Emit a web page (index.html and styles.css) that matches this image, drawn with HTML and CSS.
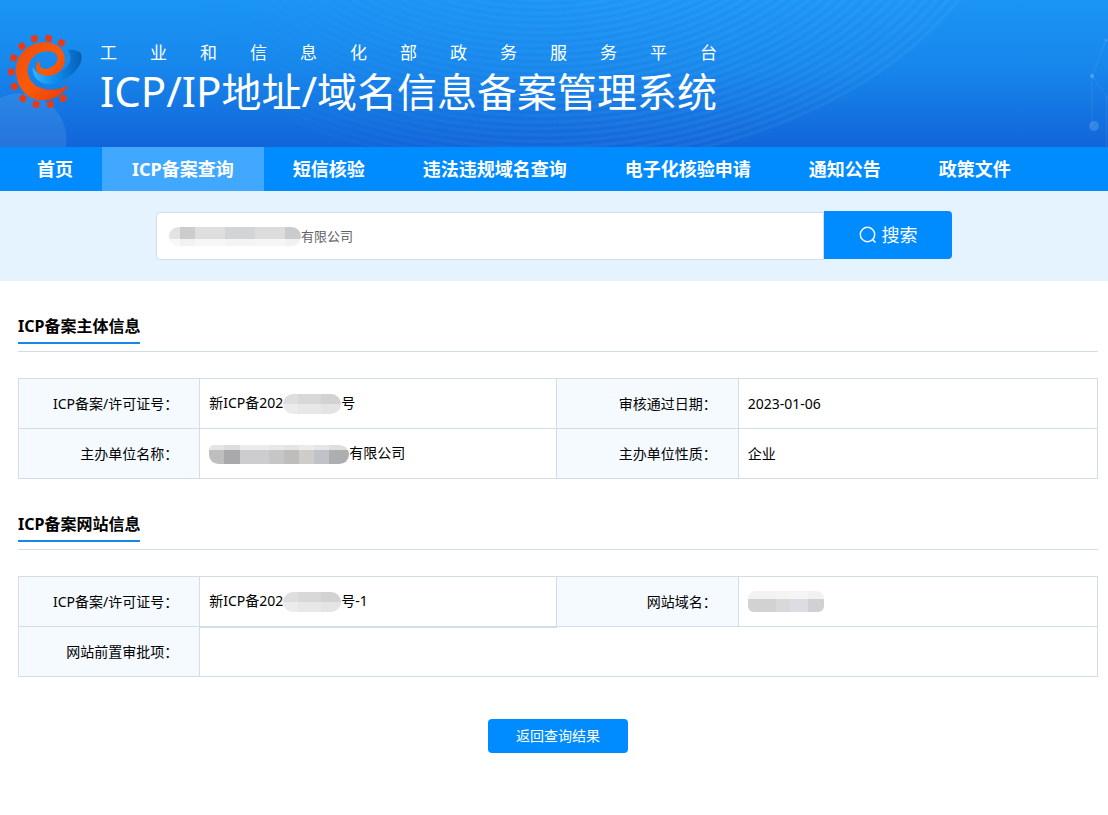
FILE: index.html
```html
<!DOCTYPE html>
<html lang="zh-CN">
<head>
<meta charset="utf-8">
<meta name="viewport" content="width=device-width, initial-scale=1">
<title>ICP/IP地址/域名信息备案管理系统</title>
<link rel="stylesheet" href="styles.css">
</head>
<body>
<header class="banner">
  <svg class="constellation" viewBox="0 0 40 147" aria-hidden="true">
    <g stroke="#fff" stroke-opacity=".08" fill="none">
      <path d="M24 76V126M24 76L38 40M24 76L40 98M38.500 96V147"/>
    </g>
    <g fill="#7fbcff">
      <circle cx="24" cy="76" r="2" opacity=".5"/>
      <circle cx="26" cy="126" r="5" opacity=".3"/>
      <circle cx="38" cy="40" r="1.500" opacity=".3"/>
    </g>
  </svg>
  <svg class="logo" viewBox="20 40 230 230" aria-hidden="true">
    <defs>
      <linearGradient id="flame" x1="0" y1="0" x2="1" y2="1">
        <stop offset="0" stop-color="#f04a10"/>
        <stop offset=".5" stop-color="#fb5c06"/>
        <stop offset="1" stop-color="#e8380f"/>
      </linearGradient>
      <linearGradient id="wave" x1="0" y1="0" x2="1" y2="0">
        <stop offset="0" stop-color="#35b4ff"/>
        <stop offset=".45" stop-color="#0c8df0"/>
        <stop offset="1" stop-color="#0660b4"/>
      </linearGradient>
    </defs>
    <g fill="#e93a18">
      <rect x="-10" y="-10" width="20" height="20" rx="4" transform="translate(185 70) rotate(32)"/>
      <rect x="-10" y="-10" width="20" height="20" rx="4" transform="translate(146 56) rotate(10)"/>
      <rect x="-10" y="-10" width="20" height="20" rx="4" transform="translate(103 57) rotate(-14)"/>
      <rect x="-10" y="-10" width="20" height="20" rx="4" transform="translate(65 80) rotate(-40)"/>
      <rect x="-10" y="-10" width="20" height="20" rx="4" transform="translate(40 115) rotate(-66)"/>
      <rect x="-10" y="-10" width="20" height="20" rx="4" transform="translate(33 158)"/>
      <rect x="-10" y="-10" width="20" height="20" rx="4" transform="translate(42 202) rotate(-28)"/>
      <rect x="-10" y="-10" width="20" height="20" rx="4" transform="translate(68 238) rotate(34)"/>
      <rect x="-10" y="-10" width="20" height="20" rx="4" transform="translate(108 256) rotate(10)"/>
      <rect x="-10" y="-10" width="20" height="20" rx="4" transform="translate(151 256) rotate(-12)"/>
      <rect x="-10" y="-10" width="20" height="20" rx="4" transform="translate(190 238) rotate(-34)"/>
    </g>
    <path fill="url(#wave)" d="M98 142C92 190 150 210 192 182C232 160 252 128 244 102C236 92 215 89 203 92C222 112 212 142 180 160C150 174 112 172 98 142Z"/>
    <path fill="url(#flame)" d="M206 197C188 232 152 246 118 243C74 236 47 198 47 152C48 104 86 68 136 68C172 69 196 92 195 122C192 158 164 172 136 169C108 166 98 144 118 122C116 142 126 151 140 149C164 142 178 124 171 108C160 90 124 92 104 108C80 128 76 160 92 184C110 214 164 222 206 197Z"/>
  </svg>
  <div class="titles">
    <p class="subtitle">工业和信息化部政务服务平台</p>
    <h1 class="title"><span class="latin">ICP/IP</span>地址<span class="latin">/</span>域名信息备案管理系统</h1>
  </div>
</header>

<nav class="nav">
  <a class="nav-item" href="#">首页</a>
  <a class="nav-item active" href="#" aria-current="page">ICP备案查询</a>
  <a class="nav-item" href="#">短信核验</a>
  <a class="nav-item" href="#">违法违规域名查询</a>
  <a class="nav-item" href="#">电子化核验申请</a>
  <a class="nav-item" href="#">通知公告</a>
  <a class="nav-item" href="#">政策文件</a>
</nav>

<form class="search">
  <div class="search-field">
    <input class="search-input" type="text" aria-label="查询内容" value="有限公司">
    <span class="mask mask-search"></span>
  </div>
  <button class="search-button" type="button">
    <svg class="search-icon" viewBox="0 0 18 18" aria-hidden="true"><circle cx="8.500" cy="8.500" r="7.200"/><path d="M13.500 13.500L16.500 16.500"/></svg>
    <span>搜索</span>
  </button>
</form>

<main class="content">
  <section class="section">
    <div class="section-head"><h2 class="section-title">ICP备案主体信息</h2></div>
    <table class="info">
      <colgroup><col class="col-label"><col class="col-value"><col class="col-label"><col></colgroup>
      <tr>
        <th scope="row">ICP备案/许可证号：</th>
        <td>新ICP备202<span class="mask mask-number"></span>号</td>
        <th scope="row">审核通过日期：</th>
        <td>2023-01-06</td>
      </tr>
      <tr>
        <th scope="row">主办单位名称：</th>
        <td><span class="mask mask-company"></span>有限公司</td>
        <th scope="row">主办单位性质：</th>
        <td>企业</td>
      </tr>
    </table>
  </section>

  <section class="section">
    <div class="section-head"><h2 class="section-title">ICP备案网站信息</h2></div>
    <table class="info">
      <colgroup><col class="col-label"><col class="col-value"><col class="col-label"><col></colgroup>
      <tr>
        <th scope="row">ICP备案/许可证号：</th>
        <td class="thick">新ICP备202<span class="mask mask-number"></span>号-1</td>
        <th scope="row">网站域名：</th>
        <td><span class="mask mask-domain"></span></td>
      </tr>
      <tr>
        <th scope="row">网站前置审批项：</th>
        <td colspan="3"></td>
      </tr>
    </table>
  </section>

  <button class="back" type="button">返回查询结果</button>
</main>
</body>
</html>
```

FILE: styles.css
```css
* {
  box-sizing: border-box;
}

body {
  margin: 0;
  background: #fff;
  color: #000;
  font: 14px/20px "Noto Sans", "Noto Sans CJK SC", sans-serif;
}

button,
input {
  font: inherit;
}

/* Banner */
.banner {
  position: relative;
  display: flex;
  align-items: flex-start;
  gap: 17px;
  min-height: 147px;
  padding: 33px 7px 0;
  overflow: hidden;
  color: #fff;
  background:
    radial-gradient(circle at 20px 140px, rgba(255, 255, 255, 0.09) 46px, transparent 47px),
    linear-gradient(#1b95f5, #1787ec 45%, #1265d8);
}

.banner::before {
  content: "";
  position: absolute;
  inset: 0;
  background: repeating-radial-gradient(480px 320px at 540px -150px, rgba(120, 200, 255, 0) 0, rgba(120, 200, 255, 0.12) 1%, rgba(120, 200, 255, 0) 2%);
  mask:
    radial-gradient(480px 320px at 540px -150px, #000 99%, transparent 100%),
    linear-gradient(90deg, transparent 18%, #000 55%);
  mask-composite: intersect;
}

.constellation {
  position: absolute;
  top: 0;
  right: 0;
  width: 40px;
  height: 147px;
}

.logo {
  position: relative;
  flex: none;
  width: 76px;
  height: 76px;
}

.titles {
  position: relative;
  padding-top: 8px;
}

.subtitle {
  margin: 0;
  font-size: 17px;
  line-height: 24px;
  text-align-last: justify;
}

.title {
  margin: 0;
  font-size: 40px;
  font-weight: 400;
  line-height: 52px;
}

.latin {
  font-size: 42px;
}

/* Navigation */
.nav {
  display: flex;
  flex-wrap: wrap;
  padding: 0 8px;
  background: #008cff;
}

.nav-item {
  padding: 0 29px;
  color: #fff;
  font-size: 18px;
  font-weight: 700;
  line-height: 44px;
  text-decoration: none;
}

.nav-item.active {
  padding: 0 30px;
  background: #40a9ff;
}

/* Search */
.search {
  display: flex;
  justify-content: center;
  padding: 20px 24px 21px;
  background: #e5f2ff;
}

.search-field {
  position: relative;
  flex: 0 1 668px;
  padding-top: 1px;
}

.search-input {
  display: block;
  width: 100%;
  height: 48px;
  padding: 0 12px 2px 144px;
  border: 1px solid #d2dde8;
  border-radius: 4px 0 0 4px;
  background: #fff;
  color: #606266;
  font-size: 13px;
}

.search-button {
  display: flex;
  align-items: center;
  justify-content: center;
  gap: 5px;
  width: 128px;
  height: 48px;
  border: 0;
  border-radius: 0 4px 4px 0;
  background: #008cff;
  color: #fff;
  font-size: 18px;
}

.search-icon {
  width: 18px;
  height: 18px;
  fill: none;
  stroke: #fff;
  stroke-width: 1.4;
}

/* Redacted values */
.mask {
  display: inline-block;
  vertical-align: middle;
}

.mask-search {
  position: absolute;
  top: 16px;
  left: 13px;
  width: 132px;
  height: 19px;
  border-radius: 10px;
  background:
    linear-gradient(transparent 65%, rgba(255, 255, 255, 0.75) 65%),
    linear-gradient(90deg, #e3e3e3 11px, #cbcccd 11px 26px, #dedede 26px 56px, #d3d4d6 56px 86px, #dddcdd 86px 116px, #cacbcc 116px);
}

.mask-number {
  width: 58px;
  height: 20px;
  border-radius: 10px;
  background:
    linear-gradient(transparent 50%, rgba(255, 255, 255, 0.4) 50%),
    linear-gradient(90deg, #dedede 15px, #d8d8d9 15px 38px, #d2d2d3 38px);
}

.mask-company {
  width: 140px;
  height: 19px;
  border-radius: 5px 10px 10px 10px;
  background:
    linear-gradient(rgba(255, 255, 255, 0.6) 25%, transparent 25%),
    linear-gradient(90deg, #bebec0 15px, #a9a9ab 15px 31px, #cdcdd0 31px 60px, #c6c6c9 60px 75px, #bfbdbb 75px 90px, #cfcdca 90px 105px, #c0c2c8 105px 120px, #adaeb0 120px);
}

.mask-domain {
  width: 76px;
  height: 21px;
  border-radius: 8px 8px 6px 6px;
  background:
    linear-gradient(rgba(255, 255, 255, 0.7) 38%, transparent 38%),
    linear-gradient(90deg, #d2d2d3 28px, #d9d9db 28px 42px, #dcdce2 42px 60px, #d0d1d4 60px);
}

/* Content */
.content {
  display: flex;
  flex-direction: column;
  padding: 32px 10px 62px 18px;
}

.section {
  margin-bottom: 32px;
}

.section-head {
  display: flex;
  margin-bottom: 26px;
  padding-bottom: 7px;
  border-bottom: 1px solid #d0dce6;
}

.section-title {
  margin: 0;
  padding-bottom: 2px;
  border-bottom: 2px solid #1686e8;
  font-size: 16px;
  font-weight: 700;
  line-height: 27px;
}

.info {
  width: 100%;
  table-layout: fixed;
  border-collapse: collapse;
}

.col-label {
  width: 16.8%;
}

.col-value {
  width: 33.1%;
}

.info th,
.info td {
  height: 50px;
  padding: 0 9px;
  border: 1px solid #d3dde6;
  text-align: left;
}

.info th {
  padding-right: 21px;
  background: #f4faff;
  font-weight: 400;
  text-align: right;
}

.info .thick {
  border-bottom-width: 2px;
}

.back {
  align-self: center;
  width: 140px;
  height: 34px;
  margin-top: 10px;
  border: 0;
  border-radius: 4px;
  background: #008cff;
  color: #fff;
}
```
